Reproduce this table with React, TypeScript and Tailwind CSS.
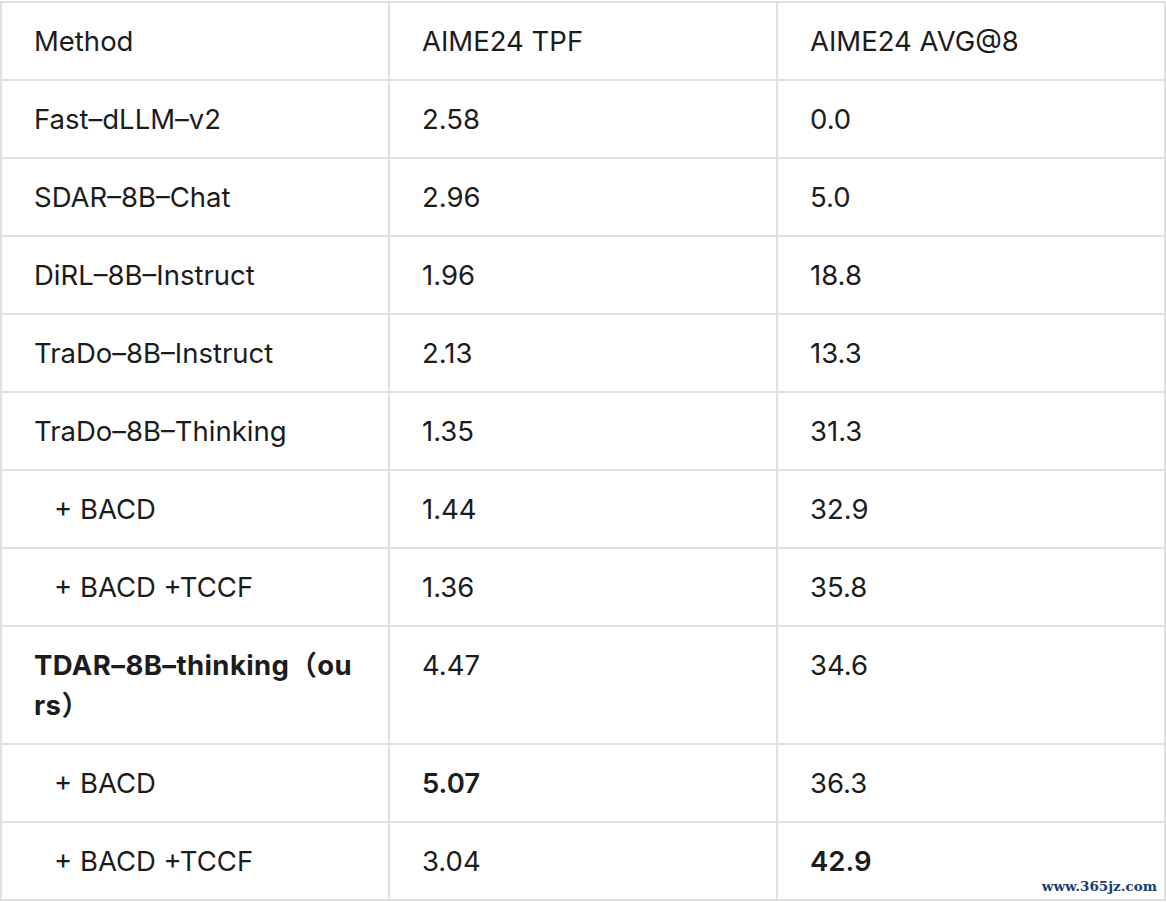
const rows: { method: string; tpf: string; avg: string; bold?: "method" | "tpf" | "avg"; indent?: boolean }[] = [
  { method: "Fast–dLLM–v2", tpf: "2.58", avg: "0.0" },
  { method: "SDAR–8B–Chat", tpf: "2.96", avg: "5.0" },
  { method: "DiRL–8B–Instruct", tpf: "1.96", avg: "18.8" },
  { method: "TraDo–8B–Instruct", tpf: "2.13", avg: "13.3" },
  { method: "TraDo–8B–Thinking", tpf: "1.35", avg: "31.3" },
  { method: "+ BACD", tpf: "1.44", avg: "32.9", indent: true },
  { method: "+ BACD +TCCF", tpf: "1.36", avg: "35.8", indent: true },
  { method: "TDAR–8B–thinking（ours）", tpf: "4.47", avg: "34.6", bold: "method" },
  { method: "+ BACD", tpf: "5.07", avg: "36.3", indent: true, bold: "tpf" },
  { method: "+ BACD +TCCF", tpf: "3.04", avg: "42.9", indent: true, bold: "avg" },
];

const cell = "border-2 border-[#dfdfe4] px-[32px] py-[18px] align-top text-left leading-[40px]";

export default function App() {
  return (
    <div className="relative h-[902px] w-[1166px] overflow-hidden bg-white pt-px font-['Inter','Noto_Sans_CJK_SC',sans-serif] text-[27.5px] text-[#1c1c1c]">
      <table className="w-[1166px] table-fixed border-collapse">
        <thead>
          <tr>
            <th className={`${cell} font-normal`}>Method</th>
            <th className={`${cell} font-normal`}>AIME24 TPF</th>
            <th className={`${cell} font-normal`}>AIME24 AVG@8</th>
          </tr>
        </thead>
        <tbody>
          {rows.map((r, i) => (
            <tr key={i}>
              <td className={`${cell} break-all ${r.bold === "method" ? "font-bold tracking-[0.4px]" : ""}`}>
                {r.indent ? <span className="pl-[20px]">{r.method}</span> : r.method}
              </td>
              <td className={`${cell} ${r.bold === "tpf" ? "font-semibold" : ""}`}>{r.tpf}</td>
              <td className={`${cell} ${r.bold === "avg" ? "font-semibold" : ""}`}>{r.avg}</td>
            </tr>
          ))}
        </tbody>
      </table>
      <div className="absolute bottom-[9px] right-[9px] font-['DejaVu_Serif',serif] text-[13.5px] font-bold leading-none text-[#1b3b72]">
        www.365jz.com
      </div>
    </div>
  );
}
